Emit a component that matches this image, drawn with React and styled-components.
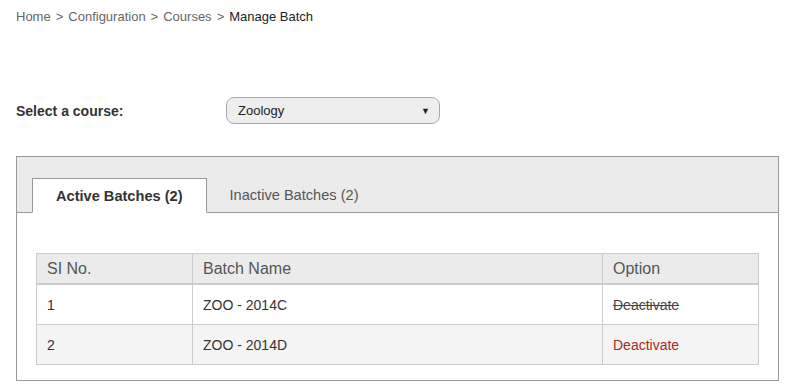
import React from "react";
import styled, { createGlobalStyle } from "styled-components";

const GlobalStyle = createGlobalStyle`
  body {
    margin: 0;
    background: #fff;
    font-family: "Liberation Sans", Arial, sans-serif;
    color: #333;
  }
`;

const Page = styled.div`
  padding: 9px 10px 0 16px;
`;

const Breadcrumb = styled.div`
  font-size: 13px;
  line-height: 16px;
  color: #666;
  a {
    color: #666;
    text-decoration: none;
  }
  span.sep {
    margin: 0 5px;
  }
  strong {
    font-weight: normal;
    color: #222;
  }
`;

const SelectRow = styled.div`
  display: flex;
  align-items: center;
  margin-top: 72px;
`;

const Label = styled.label`
  width: 210px;
  font-size: 14px;
  font-weight: bold;
  color: #333;
`;

const SelectBox = styled.div`
  width: 214px;
  height: 27px;
  box-sizing: border-box;
  border: 1px solid #aaa;
  border-radius: 8px;
  background: #eee;
  display: flex;
  align-items: center;
  justify-content: space-between;
  padding: 0 9px 0 11px;
  font-size: 13px;
  color: #222;
`;

const Arrow = styled.span`
  font-size: 9px;
  color: #222;
`;

const Panel = styled.div`
  margin-top: 32px;
  width: 763px;
  box-sizing: border-box;
  border: 1px solid #999;
`;

const TabStrip = styled.div`
  background: #ebebeb;
  border-bottom: 1px solid #999;
  padding: 21px 15px 0;
  display: flex;
  height: 56px;
  box-sizing: border-box;
`;

const Tab = styled.div`
  box-sizing: border-box;
  padding: 0 23px;
  display: flex;
  font-size: 14.6px;
  margin-bottom: -1px;
  ${(p) =>
    p.$active
      ? `
    background: #fff;
    border: 1px solid #999;
    border-bottom: 1px solid #fff;
    height: 35px;
    align-items: center;
    padding-top: 1px;
    font-weight: bold;
    color: #333;
  `
      : `
    color: #555;
    align-items: flex-start;
    padding-top: 9px;
  `}
`;

const Body = styled.div`
  padding: 40px 19px 15px;
`;

const Table = styled.table`
  width: 100%;
  border-collapse: collapse;
  font-size: 14px;
  color: #333;
  border: 1px solid #ccc;
`;

const Th = styled.th`
  text-align: left;
  font-weight: normal;
  font-size: 16px;
  color: #555;
  background: #ebebeb;
  height: 29px;
  padding: 0 10px;
  border: 1px solid #ccc;
  border-bottom: 2px solid #ccc;
  width: ${(p) => p.$w}px;
`;

const Tr = styled.tr`
  background: ${(p) => (p.$alt ? "#f4f4f4" : "#fff")};
`;

const Td = styled.td`
  height: 39px;
  padding: 0 10px;
  border: 1px solid #ccc;
`;

const Action = styled.a`
  color: ${(p) => (p.$done ? "#444" : "#a52a1e")};
  text-decoration: ${(p) => (p.$done ? "line-through" : "none")};
`;

const batches = [
  { no: 1, name: "ZOO - 2014C", done: true },
  { no: 2, name: "ZOO - 2014D", done: false },
];

export default function App() {
  return (
    <Page>
      <GlobalStyle />
      <Breadcrumb>
        <a href="#">Home</a>
        <span className="sep">&gt;</span>
        <a href="#">Configuration</a>
        <span className="sep">&gt;</span>
        <a href="#">Courses</a>
        <span className="sep">&gt;</span>
        <strong>Manage Batch</strong>
      </Breadcrumb>

      <SelectRow>
        <Label>Select a course:</Label>
        <SelectBox>
          Zoology
          <Arrow>▼</Arrow>
        </SelectBox>
      </SelectRow>

      <Panel>
        <TabStrip>
          <Tab $active>Active Batches (2)</Tab>
          <Tab>Inactive Batches (2)</Tab>
        </TabStrip>
        <Body>
          <Table>
            <thead>
              <tr>
                <Th $w={135}>SI No.</Th>
                <Th $w={389}>Batch Name</Th>
                <Th>Option</Th>
              </tr>
            </thead>
            <tbody>
              {batches.map((b, i) => (
                <Tr key={b.no} $alt={i % 2 === 1}>
                  <Td>{b.no}</Td>
                  <Td>{b.name}</Td>
                  <Td>
                    <Action href="#" $done={b.done}>
                      Deactivate
                    </Action>
                  </Td>
                </Tr>
              ))}
            </tbody>
          </Table>
        </Body>
      </Panel>
    </Page>
  );
}
